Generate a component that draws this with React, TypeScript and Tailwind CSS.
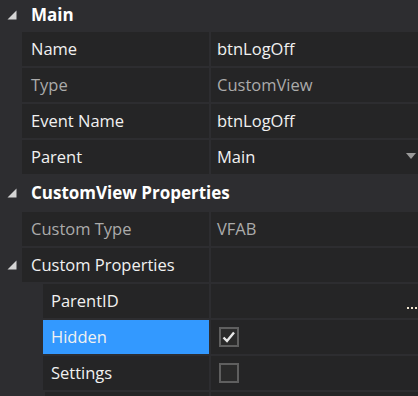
import React from "react";

const font = { fontFamily: '"Open Sans", "Noto Sans", sans-serif' };

function Tri() {
  return (
    <svg width="10" height="10" viewBox="0 0 10 10" className="block">
      <polygon points="9.5,0.5 9.5,9.5 0.5,9.5" fill="#d4d4d4" />
    </svg>
  );
}

function Header({ label, h = "h-[34px]" }: { label: string; h?: string }) {
  return (
    <div className={`flex ${h} shrink-0 items-center bg-[#2d2d30]`}>
      <div className="flex w-[22px] justify-center pl-[2px]">
        <Tri />
      </div>
      <div className="pl-[9px] text-[17px] font-bold text-white">{label}</div>
    </div>
  );
}

function Row({
  name,
  value,
  indent = 22,
  nameGray = false,
  valueGray = false,
  expander = false,
  selected = false,
  right,
}: {
  name: string;
  value?: React.ReactNode;
  indent?: number;
  nameGray?: boolean;
  valueGray?: boolean;
  expander?: boolean;
  selected?: boolean;
  right?: React.ReactNode;
}) {
  return (
    <div className="flex h-[34px] shrink-0 gap-[2px]">
      <div className="flex w-[209px] shrink-0">
        <div
          className={`flex shrink-0 items-center justify-center pl-[2px] ${
            indent === 22 ? "w-[22px]" : "w-[43px]"
          }`}
        >
          {expander ? <Tri /> : null}
        </div>
        <div
          className={`flex flex-1 items-center ${
            indent === 22 ? "pl-[9px]" : "pl-[8px]"
          } ${selected ? "bg-[#3399ff]" : "bg-[#252526]"} text-[16.5px] ${
            nameGray ? "text-[#ababab]" : "text-[#f1f1f1]"
          }`}
        >
          {name}
        </div>
      </div>
      <div
        className={`relative flex flex-1 items-center bg-[#252526] pl-[6px] text-[16.5px] ${
          valueGray ? "text-[#ababab]" : "text-[#f1f1f1]"
        }`}
      >
        {value}
        {right}
      </div>
    </div>
  );
}

function Checkbox({ checked }: { checked: boolean }) {
  return (
    <div className="ml-[2px] flex h-[20px] w-[20px] items-center justify-center border-2 border-[#5f5f5f] bg-[#2a2a2a]">
      {checked ? (
        <svg width="16" height="16" viewBox="0 0 16 16">
          <polyline
            points="2.5,8.5 6,12 13,3.5"
            fill="none"
            stroke="#e8e8e8"
            strokeWidth="2.4"
          />
        </svg>
      ) : null}
    </div>
  );
}

export default function App() {
  return (
    <div
      className="flex h-[396px] w-[418px] flex-col gap-[2px] overflow-hidden bg-[#2d2d30]"
      style={font}
    >
      <Header label="Main" h="h-[30px]" />
      <Row name="Name" value="btnLogOff" />
      <Row name="Type" value="CustomView" nameGray valueGray />
      <Row name="Event Name" value="btnLogOff" />
      <Row
        name="Parent"
        value="Main"
        right={
          <svg
            width="10"
            height="6"
            viewBox="0 0 10 6"
            className="absolute right-[2px] top-[13px]"
          >
            <polygon points="0,0 10,0 5,6" fill="#9a9a9a" />
          </svg>
        }
      />
      <Header label="CustomView Properties" />
      <Row name="Custom Type" value="VFAB" nameGray valueGray />
      <Row name="Custom Properties" expander />
      <Row
        name="ParentID"
        indent={43}
        right={
          <div className="absolute right-[1px] top-[23px] flex gap-[2px]">
            <span className="h-[2px] w-[2px] bg-[#f0e6d0]" />
            <span className="h-[2px] w-[2px] bg-[#f0e6d0]" />
            <span className="h-[2px] w-[2px] bg-[#f0e6d0]" />
          </div>
        }
      />
      <Row name="Hidden" indent={43} selected value={<Checkbox checked />} />
      <Row name="Settings" indent={43} value={<Checkbox checked={false} />} />
      <div className="flex h-[34px] shrink-0 gap-[2px]">
        <div className="w-[43px]" />
        <div className="w-[164px] bg-[#252526]" />
        <div className="flex-1 bg-[#252526]" />
      </div>
    </div>
  );
}
